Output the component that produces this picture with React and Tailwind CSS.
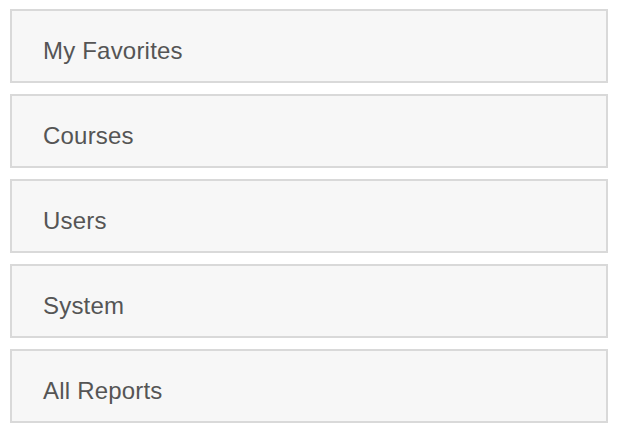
import React from 'react';

const items = ['My Favorites', 'Courses', 'Users', 'System', 'All Reports'];

export default function App() {
    return (
        <div className="w-[620px] h-[432px] bg-white px-[10px] pt-[9px] flex flex-col gap-[11px]" style={{ fontFamily: '"Liberation Sans", Arial, sans-serif' }}>
            {items.map(label => (
                <div
                    key={label}
                    className="h-[74px] w-[598px] border-2 border-[#d9d9d9] bg-[#f7f7f7] pl-[31px] pt-[10px] flex items-center text-[24px] tracking-[0.2px] text-[#555555]"
                >
                    {label}
                </div>
            ))}
        </div>
    );
}
